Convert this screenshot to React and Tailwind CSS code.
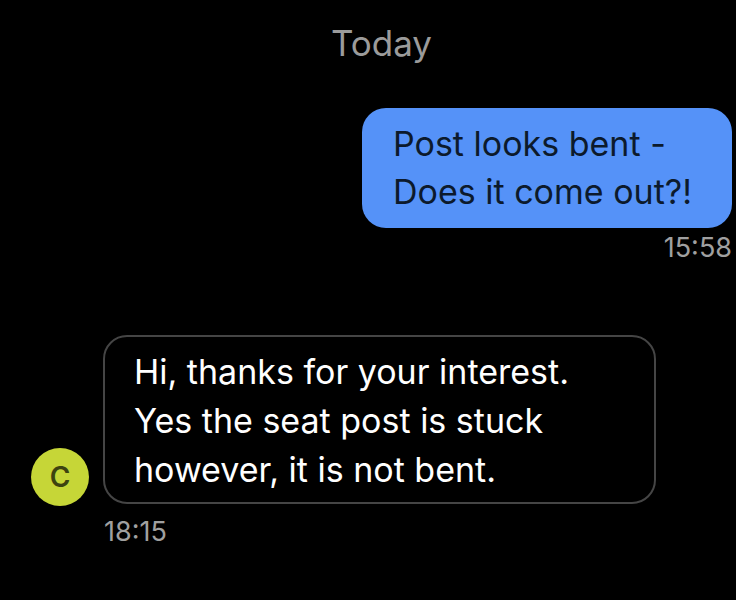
export default function App() {
    return (
        <div className="w-[736px] h-[600px] bg-black overflow-hidden font-['Inter',sans-serif] flex flex-col">
            <div className="pt-[21px] pl-[27px] text-center text-[35px] leading-[44px] text-[#9b9b9b]">
                Today
            </div>

            <div className="mt-[43px] flex justify-end pr-[4px]">
                <div className="w-[370px] h-[120px] rounded-[24px] bg-[#5592f8] pl-[31px] pt-[12px] text-[34px] leading-[48px] text-[#0c1a2c]">
                    Post looks bent -<br />
                    Does it come out?!
                </div>
            </div>
            <div className="mt-[4px] pr-[4px] text-right text-[27px] leading-[32px] text-[#a0a0a0]">
                15:58
            </div>

            <div className="mt-[71px] flex items-end gap-[14px] pl-[31px]">
                <div className="w-[58px] h-[58px] mb-[-2px] rounded-full bg-[#c6d637] flex items-center justify-center text-[28px] font-semibold text-[#3d4310]">
                    C
                </div>
                <div className="w-[553px] h-[169px] rounded-[24px] border-2 border-[#454545] pl-[29px] pt-[10px] text-[34px] leading-[49px] text-white">
                    Hi, thanks for your interest.<br />
                    Yes the seat post is stuck<br />
                    however, it is not bent.
                </div>
            </div>
            <div className="mt-[12px] pl-[104px] text-[27px] leading-[32px] text-[#a0a0a0]">
                18:15
            </div>
        </div>
    );
}
